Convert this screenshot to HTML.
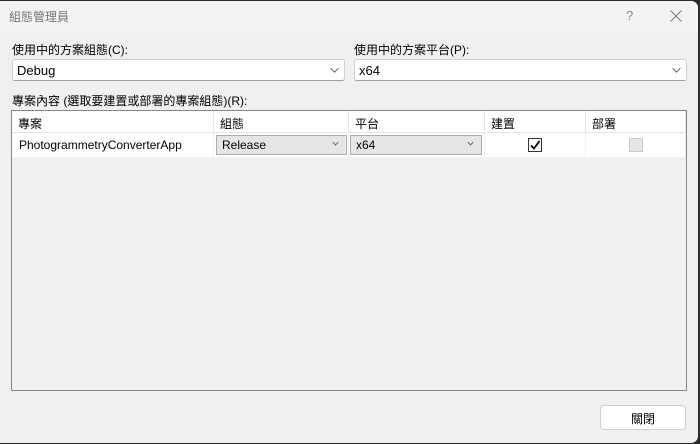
<!DOCTYPE html><html><head><style>
*{box-sizing:border-box;margin:0;padding:0}
body{width:700px;height:444px;background:#2b2b2b;font-family:"Liberation Sans","Noto Sans CJK TC",sans-serif;font-size:12px;color:#000;position:relative;overflow:hidden}
.win{position:absolute;left:0;top:1px;width:698px;height:442px;background:#f0f0f0;border-radius:0 7px 7px 0;overflow:hidden}
.title{position:absolute;left:0;top:0;width:100%;height:31px;background:#f3f3f3}
.abs{position:absolute}
.combo{position:absolute;height:22px;background:#fff;border:1px solid #d0d0d0;border-bottom-color:#a0a0a0;border-radius:3px;padding:3px 0 0 4px;font-size:13px}
.chev{position:absolute;right:6px;top:5px;width:7px;height:7px;border-right:1px solid #555;border-bottom:1px solid #555;transform:rotate(45deg) scale(.85)}
.grid{position:absolute;left:11px;top:109px;width:676px;height:281px;border:1px solid #828790;background:#f0f0f0}
.hd{position:absolute;top:0;height:22px;background:#fff;border-right:1px solid #e5e5e5;border-bottom:1px solid #e5e5e5;padding:4px 0 0 6px;font-size:12px}
.cell{position:absolute;top:22px;height:24px;background:#fff;border-right:1px solid #f0f0f0}
.dd{position:absolute;top:2px;height:20px;background:#e5e5e5;border:1px solid #adadad;padding:2px 0 0 5px;font-size:12px}
.dd .chev{top:4px;width:5px;height:5px;right:8px}
</style></head><body><div class="win">
<div class="title"></div>
<div class="abs" style="left:9px;top:7px;color:#777;font-size:12px">組態管理員</div>
<div class="abs" style="left:626px;top:7px;color:#888;font-size:13px">?</div>
<svg class="abs" style="left:670px;top:9px" width="12" height="12"><path d="M0.5 0.5L11.5 11.5M11.5 0.5L0.5 11.5" stroke="#777" stroke-width="1"/></svg>
<div class="abs" style="left:12px;top:40px">使用中的方案組態(C):</div>
<div class="combo" style="left:12px;top:58px;width:333px">Debug<div class="chev"></div></div>
<div class="abs" style="left:354px;top:40px">使用中的方案平台(P):</div>
<div class="combo" style="left:354px;top:58px;width:333px">x64<div class="chev"></div></div>
<div class="abs" style="left:12px;top:91px">專案內容 (選取要建置或部署的專案組態)(R):</div>
<div class="grid">
<div class="hd" style="left:0;width:202px">專案</div>
<div class="hd" style="left:202px;width:135px">組態</div>
<div class="hd" style="left:337px;width:136px">平台</div>
<div class="hd" style="left:473px;width:101px">建置</div>
<div class="hd" style="left:574px;width:100px">部署</div>
<div class="cell" style="left:0;width:202px;padding:5px 0 0 7px;font-size:12px">PhotogrammetryConverterApp</div>
<div class="cell" style="left:202px;width:135px"><div class="dd" style="left:2px;width:131px">Release<div class="chev"></div></div></div>
<div class="cell" style="left:337px;width:136px"><div class="dd" style="left:1px;width:132px">x64<div class="chev"></div></div></div>
<div class="cell" style="left:473px;width:101px"><div class="abs" style="left:43px;top:5px;width:14px;height:14px;border:1px solid #333;background:#fff"><svg width="12" height="12" style="position:absolute;left:0;top:0"><path d="M2 6.5L5 9.5L10.5 2" stroke="#000" stroke-width="1.8" fill="none"/></svg></div></div>
<div class="cell" style="left:574px;width:100px"><div class="abs" style="left:43px;top:5px;width:14px;height:14px;border:1px solid #ccc;background:#e6e6e6"></div></div>
</div>
<div class="abs" style="left:600px;top:404px;width:86px;height:25px;background:#fff;border:1px solid #d0d0d0;border-radius:4px;text-align:center;padding-top:4px;font-size:12px">關閉</div>
</div></body></html>
